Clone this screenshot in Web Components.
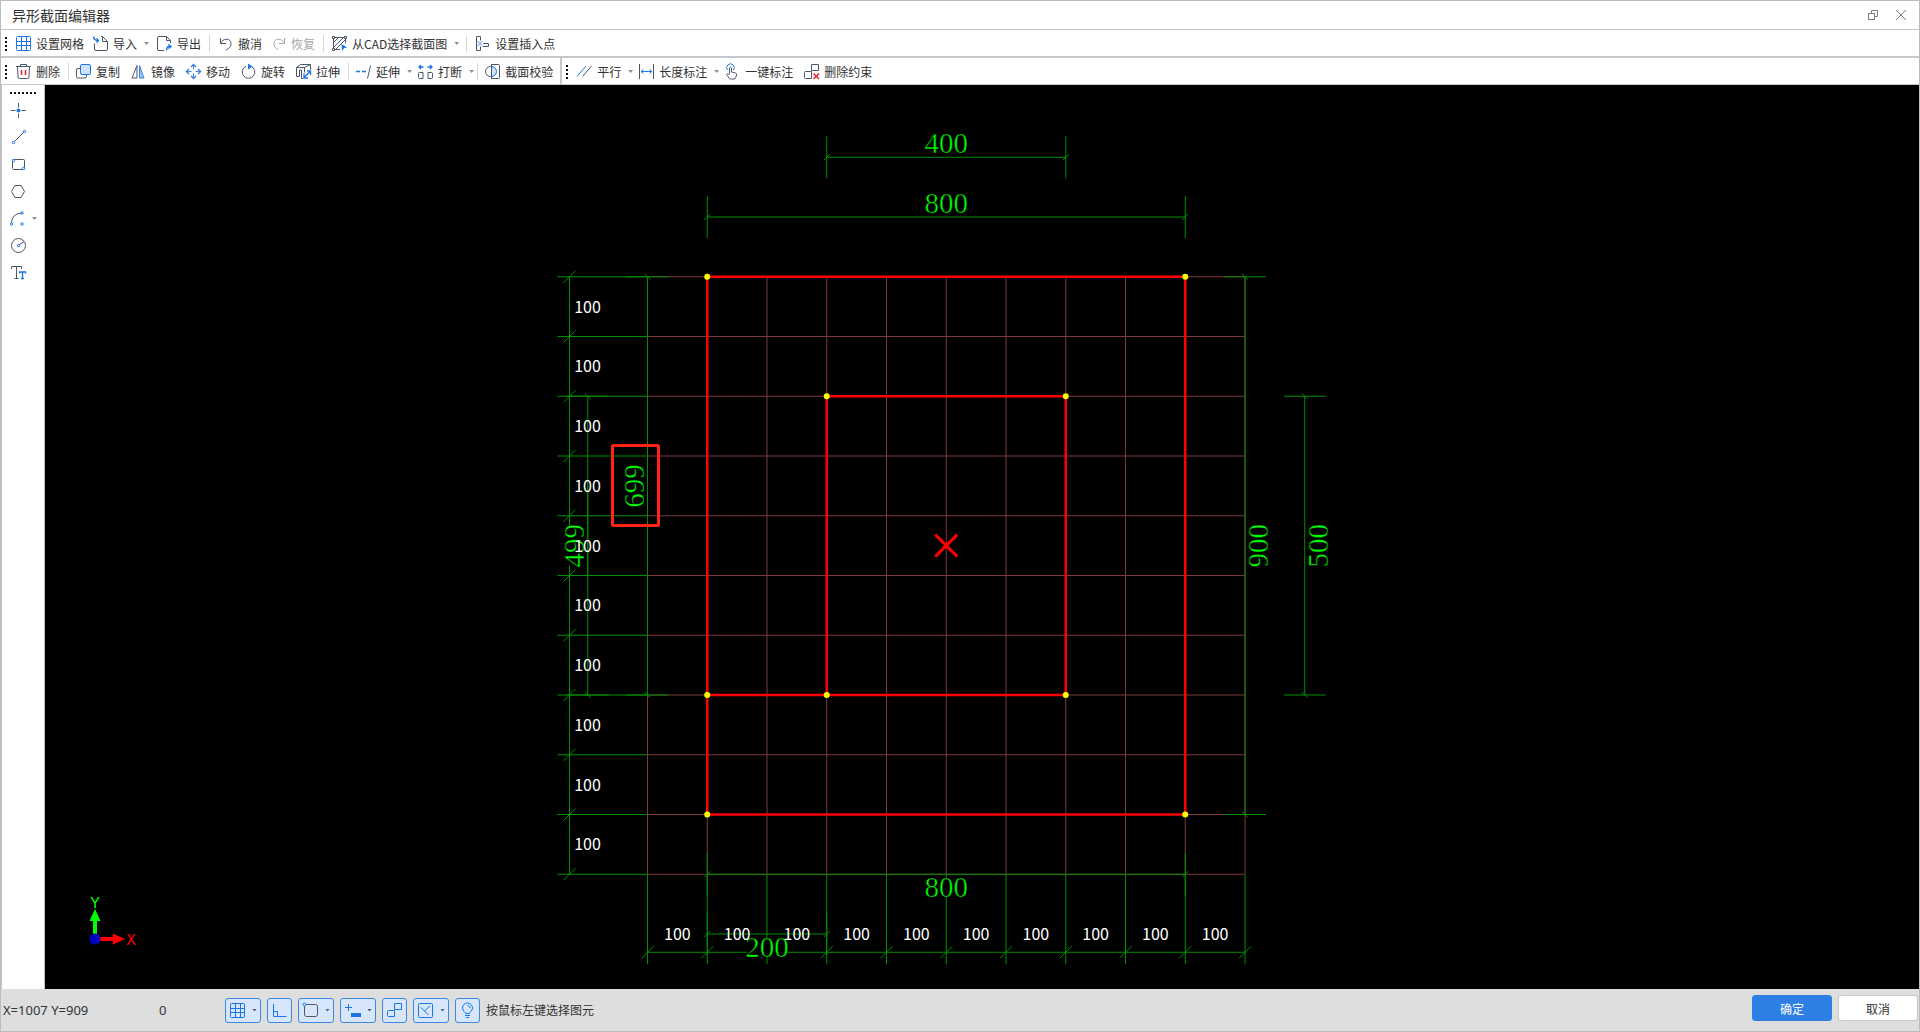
<!DOCTYPE html>
<html lang="zh-CN">
<head>
<meta charset="utf-8">
<title>异形截面编辑器</title>
<style>
  html, body { margin: 0; height: 100%; }
  body { font-family: "Noto Sans CJK SC", sans-serif; font-size: 12px; color: #333; }
</style>
</head>
<body>
<section-editor></section-editor>

<script>
const ICONS = {
  grid: '<g stroke="#1a76e8"><rect x="1.5" y="1.5" width="14" height="14" rx="1"/><path d="M6.5 1.5v14M11.5 1.5v14M1.5 6.5h14M1.5 10.5h14"/></g>',
  import: '<path d="M2.500 8.500v5.500a1.500 1.500 0 0 0 1.500 1.500h10a1.500 1.500 0 0 0 1.500-1.500V6.500l-5-5H9M10.500 1.500v5h5"/><path d="M1.500 1.500q.5 4 4 4" stroke="#1a76e8" stroke-width="1.500"/><path d="M4.500 2.500l3 3-3 3z" fill="#1a76e8" stroke="none"/>',
  export: '<path d="M8 15.500H3A1.500 1.500 0 0 1 1.500 14V3A1.500 1.500 0 0 1 3 1.500h7.500l4 4V8M10.500 1.500v4h4"/><path d="M10.500 15.500q0-4 3-4" stroke="#1a76e8" stroke-width="1.500"/><path d="M12.500 8.500l3.500 3-3.500 3z" fill="#1a76e8" stroke="none"/>',
  undo: '<path d="M3.500 3v5.500H9M3.500 8.500C5.500 3 14 2.500 14 8.500c0 3-1.500 4.500-5 6.500"/>',
  redo: '<g stroke="#a8a8a8"><path d="M14.500 3v5.500H9M14.500 8.500C12.500 3 4 2.500 4 8.500c0 3 1 4.500 4 6"/></g>',
  cad: '<path d="M3.500 2.500h11M2.500 4v10M14.500 4v4M4 14.500h5M3 7l4-4M3 12l9-9M5 14l9-9"/><path d="M1.500 1.500h2v2h-2zM13.500 1.500h2v2h-2zM1.500 13.500h2v2h-2z" fill="#fff"/><path d="M10.500 9l5.500 3.500-3 .8-2 2.700z" fill="#1a76e8" stroke="none"/>',
  insert: '<path d="M6.500 5.500v-4h-4v14h4v-4M9 8.500h5.500v3H9"/><path d="M3.500 6l5 5M8.500 6l-5 5" stroke="#4a94ec"/>',
  trash: '<path d="M1 3.500h15M5.500 3.500V1.500h6v2M2.500 3.500l.500 10.500q0 1.500 1.500 1.500h8q1.500 0 1.500-1.500l.5-10.500"/><path d="M6.500 7v5M10.500 7v5" stroke="#e8202c" stroke-width="1.500"/>',
  copy: '<path d="M5.500 5.500H3A1.500 1.500 0 0 0 1.500 7v6.500A1.500 1.500 0 0 0 3 15h7a1.500 1.500 0 0 0 1.500-1.500V12"/><rect x="5.500" y="1.500" width="10" height="10" rx="1.500" fill="#cfe2fb" stroke="#1a76e8"/>',
  mirror: '<path d="M7 2.500v12.500h-5z"/><path d="M9.500 2.500v12.500h4.500z" fill="#9cc4f4" stroke="#3b86de"/>',
  move: '<g stroke="#3b86de"><path d="M8.500 1.500v5M8.500 10.500v5M1.500 8.500h5M10.500 8.500h5"/><path d="M6 4l2.500-2.500L11 4M6 13l2.500 2.500L11 13M4 6L1.500 8.500 4 11M13 6l2.500 2.500L13 11" stroke-width="1.500"/></g>',
  rotate: '<path d="M11 3.200a6.300 6.300 0 1 1-5 0"/><path d="M8 .500l4.500 3L8 6.500z" fill="#1a76e8" stroke="none"/>',
  stretch: '<path d="M1.500 4.500l4-3h10v5M1.500 4.500h8v5M9.500 4.500l6-3M1.500 4.500v9h3V7h2v8.500h2"/><path d="M9 14.500l6-6M15.500 12V8H12M9 10.500V15h4" stroke="#1a76e8" stroke-width="1.300"/>',
  extend: '<path d="M1 8.500h4M7 8.500h4" stroke="#1a76e8" stroke-width="1.300"/><path d="M15.500 2.500l-3 13"/>',
  break: '<path d="M6 9.500H2.500a1 1 0 0 0-1 1v4a1 1 0 0 0 1 1H6zM14.500 9.500H11v6h3.500a1 1 0 0 0 1-1v-4a1 1 0 0 0-1-1z"/><path d="M2 4h4.500M10.500 4H15M4 2L2 4l2 2M13 2l2 2-2 2" stroke="#1a76e8" stroke-width="1.300"/>',
  check: '<path d="M7.500 1.500h7a1 1 0 0 1 1 1v12a1 1 0 0 1-1 1h-7"/><circle cx="6.500" cy="8.500" r="5"/><path d="M7.500 3.500a5 5 0 0 1 0 10z" fill="#cfe2fb" stroke="#1a76e8"/><path d="M7.500 1v15"/>',
  parallel: '<path d="M1 13.500L10 3" stroke="#1a76e8"/><path d="M6.500 13.500L15.500 3"/>',
  length: '<path d="M1.500 1v15M15.500 1v15"/><path d="M3 8.500h11M5.500 6.500l-2.500 2 2.500 2M11.500 6.500l2.500 2-2.500 2" stroke="#1a76e8"/>',
  hand: '<path d="M5.500 10.500V5q1-1.500 2 0v4l4 1q1.500.5 1 2l-1 3q-.5 1-1.500 1H6.500q-1 0-1.500-1L2.500 11.500q0-2 3 0"/><path d="M3.500 7a3.800 3.800 0 1 1 6 0" stroke="#1a76e8"/>',
  unlink: '<path d="M8.500 1.500h7v6h-7zM8.500 8.500h-6a1 1 0 0 0-1 1V14.500a1 1 0 0 0 1 1h6z"/><path d="M10.500 10.500l5.500 5.500M16 10.500L10.500 16" stroke="#e8202c" stroke-width="1.500"/>',
  point: '<path d="M8.500 1v4.500M8.500 11.500V16M1 8.500h4.500M11.500 8.500H16"/><circle cx="8.500" cy="8.500" r="2" fill="#1a76e8" stroke="none"/>',
  line: '<path d="M4.500 12.500l9-9"/><g stroke="#1a76e8" fill="#fff"><circle cx="3.500" cy="13.500" r="1.200"/><circle cx="14.500" cy="2.500" r="1.200"/></g>',
  rect: '<rect x="2.500" y="3.500" width="12" height="10" rx="1"/><g stroke="#1a76e8" fill="#fff"><circle cx="3.500" cy="4.500" r="1.200"/><circle cx="13.500" cy="12.500" r="1.200"/></g>',
  hex: '<path d="M5 2.500h6l3.500 6-3.500 6H5l-3.500-6z"/>',
  arc: '<path d="M1.500 13Q2 4 11 3"/><g stroke="#1a76e8" fill="#fff"><circle cx="1.500" cy="14" r="1.200"/><circle cx="12" cy="3" r="1.200"/><circle cx="12" cy="14" r="1.200"/></g>',
  circle: '<circle cx="8.500" cy="8.500" r="7"/><path d="M9.500 7.500L14 4.500"/><circle cx="8.500" cy="8.500" r="1.200" stroke="#1a76e8" fill="#fff"/>',
  text: '<path d="M1.500 5V2.500h10V5M6.500 2.500v12M4.500 14.500h4"/><path d="M9.500 9.500V8h6v1.500M12.500 8v6.500M11 14.500h3" stroke="#1a76e8" stroke-width="1.300"/>',
  ortho: '<g stroke="#1a76e8"><path d="M2.500 2v12.500h13M2.500 9.500h4v5"/></g>',
  snap: '<path d="M4 2.500h9.500a2 2 0 0 1 2 2v8a2 2 0 0 1-2 2h-9a2 2 0 0 1-2-2V4"/><circle cx="2.500" cy="2.500" r="1.500" stroke="#1a76e8" fill="#d8e6fb"/>',
  dynin: '<g stroke="#1a76e8"><path d="M4.500 2v7M1 5.500h7"/><rect x="7.500" y="11.500" width="9" height="3" fill="#1a76e8"/></g>',
  link: '<g stroke="#1a76e8"><path d="M8.500 1.500h7v6h-7zM8.500 8.500v6H2.500a1 1 0 0 1-1-1v-4a1 1 0 0 1 1-1z"/></g>',
  track: '<g stroke="#1a76e8"><rect x="1.500" y="1.500" width="14" height="14" rx="1"/><path d="M4 5.500l7.500 7.500M7.500 9l5.500-5"/></g>',
  bulb: '<g stroke="#1a76e8"><path d="M6.500 11.500c0-1.500-3-2.500-3-5.500a5 5 0 0 1 10 0c0 3-3 4-3 5.500zM6 13.500h5M7 15.500h3"/><path d="M8.500 3.500a2.500 2.500 0 0 1 2.500 2.500"/></g>',
  restore: '<g stroke="#7c7c7c"><rect x="3.500" y="6.500" width="6" height="6"/><path d="M6.500 6.500v-3h6v6h-3"/></g>',
  close: '<path d="M3 3l10 10M13 3L3 13" stroke="#7c7c7c"/>'
};

class EditorIcon extends HTMLElement {
  connectedCallback() {
    const root = this.attachShadow({ mode: 'open' });
    root.innerHTML = `
      <style>
        :host { display: block; width: 17px; height: 17px; flex: none; }
        svg { display: block; overflow: visible; }
      </style>
      <svg width="17" height="17" viewBox="0 0 17 17" fill="none" stroke="#4c566b" aria-hidden="true">${ICONS[this.getAttribute('name')]}</svg>`;
  }
}
customElements.define('editor-icon', EditorIcon);

class ToolButton extends HTMLElement {
  connectedCallback() {
    const root = this.attachShadow({ mode: 'open' });
    root.innerHTML = `
      <style>
        :host { display: flex; flex: none; }
        :host([menu]) { margin-right: var(--menu-trim, 0); }
        button { display: flex; align-items: center; gap: 4px; padding: 0; border: 0; background: none;
          font: inherit; line-height: 19px; color: inherit; white-space: nowrap; }
        button:disabled { color: #a8a8a8; }
        .caret { width: 5px; height: 3px; margin-left: 3px; background: #909090; clip-path: polygon(0 0, 100% 0, 50% 100%); }
      </style>
      <button type="button" ${this.hasAttribute('off') ? 'disabled' : ''}>
        <editor-icon name="${this.getAttribute('icon')}"></editor-icon>
        <slot></slot>
        ${this.hasAttribute('menu') ? '<span class="caret"></span>' : ''}
      </button>`;
  }
}
customElements.define('tool-button', ToolButton);

class ToolSeparator extends HTMLElement {
  connectedCallback() {
    this.attachShadow({ mode: 'open' }).innerHTML = `
      <style>:host { display: block; flex: none; width: 1px; height: 17px; margin: var(--sep-margin, 0); background: #d4d6da; }</style>`;
  }
}
customElements.define('tool-separator', ToolSeparator);

class ToolBar extends HTMLElement {
  connectedCallback() {
    this.attachShadow({ mode: 'open' }).innerHTML = `
      <style>
        :host { display: flex; align-items: center; gap: var(--gap, 8px); height: 25px; padding-top: 1px; background: #fff; }
        .grip { width: 2px; height: 14px; margin: 0 calc(8px - var(--gap, 8px)) 0 4px; flex: none;
          background: repeating-linear-gradient(#111 0 2px, transparent 2px 4px); }
      </style>
      <span class="grip"></span><slot></slot>`;
  }
}
customElements.define('tool-bar', ToolBar);

class TitleBar extends HTMLElement {
  connectedCallback() {
    this.attachShadow({ mode: 'open' }).innerHTML = `
      <style>
        :host { display: flex; align-items: center; justify-content: space-between; height: 28px;
          padding: 0 9px 0 11px; border-bottom: 1px solid #c3c3c7; background: #fff; }
        h1 { margin: 0; font-size: 14px; line-height: 20px; font-weight: 400; }
        div { display: flex; gap: 11px; }
        button { display: block; padding: 0; border: 0; background: none; }
      </style>
      <h1><slot></slot></h1>
      <div>
        <button type="button" aria-label="还原"><editor-icon name="restore"></editor-icon></button>
        <button type="button" aria-label="关闭"><editor-icon name="close"></editor-icon></button>
      </div>`;
  }
}
customElements.define('title-bar', TitleBar);

class DrawTools extends HTMLElement {
  connectedCallback() {
    const tools = [['point', '点'], ['line', '直线'], ['rect', '矩形'], ['hex', '多边形'], ['arc', '圆弧'], ['circle', '圆'], ['text', '文字']];
    this.attachShadow({ mode: 'open' }).innerHTML = `
      <style>
        :host { display: flex; flex-direction: column; flex: none; box-sizing: border-box; width: 44px; padding-top: 7px;
          background: #fff; border-left: 1px solid #c3c3c7; border-right: 1px solid #c3c3c7; }
        .grip { width: 26px; height: 2px; margin: 0 0 3px 8px; background: repeating-linear-gradient(90deg, #111 0 2px, transparent 2px 4px); }
        button { display: flex; align-items: center; height: 27px; padding: 0 0 0 8px; border: 0; background: none; }
        .caret { width: 5px; height: 3px; margin-left: 5px; background: #909090; clip-path: polygon(0 0, 100% 0, 50% 100%); }
      </style>
      <span class="grip"></span>
      ${tools.map(([icon, label]) => `<button type="button" aria-label="${label}"><editor-icon name="${icon}"></editor-icon>${icon === 'arc' ? '<span class="caret"></span>' : ''}</button>`).join('')}`;
  }
}
customElements.define('draw-tools', DrawTools);

class SectionCanvas extends HTMLElement {
  connectedCallback() {
    // Section coordinates are in millimetres, measured from the grid's top-left corner.
    const SCALE = 0.5975, CELL = 100, COUNT = 10;
    const X = mm => 602.5 + mm * SCALE;
    const Y = mm => 191.75 + mm * SCALE;
    const seg = (x1, y1, x2, y2) => `M${x1} ${y1}L${x2} ${y2}`;

    let grid = '', dims = '', labels = '', dimText = '';
    const left = X(0), right = X(1000), top = Y(0), bottom = Y(1000);
    const chainX = left - 78, chainY = bottom + 78;
    for (let i = 0; i <= COUNT; i++) {
      const x = X(i * CELL), y = Y(i * CELL);
      grid += seg(x, top, x, bottom) + seg(left, y, right, y);
      dims += seg(chainX - 12, y, left, y) + seg(chainX - 6, y + 6, chainX + 6, y - 6);
      dims += seg(x, bottom, x, chainY + 12) + seg(x - 6, chainY + 6, x + 6, chainY - 6);
      if (i < COUNT) {
        labels += `<text x="${chainX + 18}" y="${Y(i * CELL + 50) + 6}">100</text>`;
        labels += `<text x="${X(i * CELL + 50)}" y="${chainY - 12}">100</text>`;
      }
    }
    dims += seg(chainX, top, chainX, bottom) + seg(left, chainY, right, chainY);

    const EXT = 21, TICK = 3;
    const horizontal = (from, to, at, label, below) => {
      const a = X(from), b = X(to), y = Y(at), base = y + (below ? 23 : -4), mid = (a + b) / 2;
      dims += seg(a, y, b, y);
      for (const x of [a, b]) dims += seg(x, y - EXT, x, y + EXT) + seg(x - TICK, y + TICK, x + TICK, y - TICK);
      dimText += `<rect x="${mid - 20}" y="${base - 19}" width="40" height="19" fill="#000"/><text x="${mid}" y="${base}">${label}</text>`;
    };
    const vertical = (from, to, at, label, after) => {
      const a = Y(from), b = Y(to), x = X(at), base = x + (after ? 23 : -4), mid = (a + b) / 2;
      dims += seg(x, a, x, b);
      for (const y of [a, b]) dims += seg(x - EXT, y, x + EXT, y) + seg(x - TICK, y - TICK, x + TICK, y + TICK);
      dimText += `<g transform="translate(${base} ${mid}) rotate(-90)"><rect x="-20" y="-19" width="40" height="19" fill="#000"/><text>${label}</text></g>`;
    };
    horizontal(300, 700, -200, '400');
    horizontal(100, 900, -100, '800');
    horizontal(100, 900, 1000, '800', true);
    horizontal(100, 300, 1100, '200', true);
    vertical(0, 700, 0, '699');
    vertical(200, 700, -100, '499');
    vertical(0, 900, 1000, '900', true);
    vertical(200, 700, 1100, '500', true);

    const outline = [[100, 0, 900, 0], [900, 0, 900, 900], [900, 900, 100, 900], [100, 900, 100, 0],
      [300, 200, 700, 200], [700, 200, 700, 700], [700, 700, 100, 700], [300, 700, 300, 200]]
      .map(([a, b, c, d]) => seg(X(a), Y(b), X(c), Y(d))).join('');
    const nodes = [[100, 0], [900, 0], [300, 200], [700, 200], [100, 700], [300, 700], [700, 700], [100, 900], [900, 900]]
      .map(([a, b]) => `<circle cx="${X(a)}" cy="${Y(b)}" r="3"/>`).join('');
    const cx = X(500), cy = Y(450);

    this.attachShadow({ mode: 'open' }).innerHTML = `
      <style>
        :host { display: block; flex: 1; min-width: 0; min-height: 0; background: #000; overflow: hidden; }
        svg { display: block; width: 100%; height: 100%; }
        text { text-anchor: middle; stroke: none; }
        .cell { font: 16px "Noto Sans CJK SC", sans-serif; fill: #fff; }
        .dim { font: 29px "Liberation Serif", serif; fill: #0f0; }
        .dim text { stroke: #000; stroke-width: .5; }
        .axis { font: 16px "Liberation Mono", monospace; }
      </style>
      <svg viewBox="0 0 1874 904" fill="none">
        <path d="${grid}" stroke="#7c3a3e"/>
        <path d="${dims}" stroke="#009000"/>
        <path d="${outline}" stroke="#f00" stroke-width="2.500"/>
        <g fill="#ff0">${nodes}</g>
        <path d="${seg(cx - 11, cy - 11, cx + 11, cy + 11)}${seg(cx + 11, cy - 11, cx - 11, cy + 11)}" stroke="#f00" stroke-width="3"/>
        <g class="dim">${dimText}</g>
        <path d="${seg(X(-100), Y(350), X(-100), Y(500))}" stroke="#009000"/>
        <g class="cell">${labels}</g>
        <rect x="567.500" y="360.500" width="46" height="80" rx="1" stroke="#ff2314" stroke-width="3"/>
        <g class="axis">
          <path d="M48 850V836h-3.500L50 824l5.500 12H52v14z" fill="#0f0"/>
          <path d="M54 852h14v-3.500L80 854l-12 5.500V856H54z" fill="#f00"/>
          <circle cx="50" cy="854" r="5.500" fill="#0000c0"/>
          <text x="50" y="823" fill="#0f0">Y</text>
          <text x="86" y="860" fill="#f00">X</text>
        </g>
      </svg>`;
  }
}
customElements.define('section-canvas', SectionCanvas);

class StatusToggle extends HTMLElement {
  connectedCallback() {
    const menu = this.hasAttribute('menu');
    this.attachShadow({ mode: 'open' }).innerHTML = `
      <style>
        :host { display: block; flex: none; }
        button { display: flex; align-items: center; justify-content: space-between; box-sizing: border-box;
          width: ${menu ? 36 : 25}px; height: 25px; padding: 0 3px;
          border: 1px solid #3d88e4; border-radius: 3px; background: #d8e6fb; }
        .caret { width: 5px; height: 3px; background: #566070; clip-path: polygon(0 0, 100% 0, 50% 100%); }
      </style>
      <button type="button" aria-pressed="true" aria-label="${this.getAttribute('label')}">
        <editor-icon name="${this.getAttribute('icon')}"></editor-icon>${menu ? '<span class="caret"></span>' : ''}
      </button>`;
  }
}
customElements.define('status-toggle', StatusToggle);

class StatusBar extends HTMLElement {
  connectedCallback() {
    this.attachShadow({ mode: 'open' }).innerHTML = `
      <style>
        :host { display: flex; align-items: center; flex: none; height: 42px; padding: 0 1px 0 2px; background: #dededf; }
        .coords, .count { font: 13px "Noto Sans", sans-serif; line-height: 18px; }
        .coords { width: 156px; }
        .count { width: 66px; }
        .toggles { display: flex; gap: 6px; margin-right: 6px; }
        .prompt { flex: 1; line-height: 18px; }
        .actions { display: flex; gap: 6px; padding-bottom: 4px; }
        .actions button { box-sizing: border-box; width: 80px; height: 26px; padding: 0; border: 1px solid #c6c6c8; border-radius: 3px;
          background: #fff; font: inherit; color: #333; }
        .actions .primary { border-color: #2d7fe3; background: #2d7fe3; color: #fff; }
      </style>
      <span class="coords">X=1007 Y=909</span>
      <span class="count">0</span>
      <div class="toggles">
        <status-toggle icon="grid" label="网格" menu></status-toggle>
        <status-toggle icon="ortho" label="正交"></status-toggle>
        <status-toggle icon="snap" label="捕捉" menu></status-toggle>
        <status-toggle icon="dynin" label="动态输入" menu></status-toggle>
        <status-toggle icon="link" label="约束"></status-toggle>
        <status-toggle icon="track" label="追踪" menu></status-toggle>
        <status-toggle icon="bulb" label="提示"></status-toggle>
      </div>
      <span class="prompt">按鼠标左键选择图元</span>
      <div class="actions">
        <button type="button" class="primary">确定</button>
        <button type="button">取消</button>
      </div>`;
  }
}
customElements.define('status-bar', StatusBar);

class SectionEditor extends HTMLElement {
  connectedCallback() {
    this.attachShadow({ mode: 'open' }).innerHTML = `
      <style>
        :host { display: flex; flex-direction: column; box-sizing: border-box; height: 100vh; border: 1px solid #bcbcbe; background: #fff; }
        .file { --gap: 8px; --menu-trim: -1px; --sep-margin: 0 -1px 0 0; border-bottom: 2px solid #c4c7cc; }
        .row { display: flex; border-bottom: 1px solid #c4c7cc; }
        .row tool-bar { --gap: 10px; --menu-trim: -5px; --sep-margin: 0 -4px 0 -2px; }
        .edit { padding-right: 7px; border-right: 2px solid #c4c7cc; }
        .limits { flex: 1; }
        .work { display: flex; flex: 1; min-height: 0; }
      </style>
      <title-bar>异形截面编辑器</title-bar>
      <tool-bar class="file">
        <tool-button icon="grid">设置网格</tool-button>
        <tool-button icon="import" menu>导入</tool-button>
        <tool-button icon="export">导出</tool-button>
        <tool-separator></tool-separator>
        <tool-button icon="undo">撤消</tool-button>
        <tool-button icon="redo" off>恢复</tool-button>
        <tool-separator></tool-separator>
        <tool-button icon="cad" menu>从CAD选择截面图</tool-button>
        <tool-separator></tool-separator>
        <tool-button icon="insert">设置插入点</tool-button>
      </tool-bar>
      <div class="row">
        <tool-bar class="edit">
          <tool-button icon="trash">删除</tool-button>
          <tool-separator></tool-separator>
          <tool-button icon="copy">复制</tool-button>
          <tool-button icon="mirror">镜像</tool-button>
          <tool-button icon="move">移动</tool-button>
          <tool-button icon="rotate">旋转</tool-button>
          <tool-button icon="stretch">拉伸</tool-button>
          <tool-separator></tool-separator>
          <tool-button icon="extend" menu>延伸</tool-button>
          <tool-button icon="break" menu>打断</tool-button>
          <tool-separator></tool-separator>
          <tool-button icon="check">截面校验</tool-button>
        </tool-bar>
        <tool-bar class="limits">
          <tool-button icon="parallel" menu>平行</tool-button>
          <tool-button icon="length" menu>长度标注</tool-button>
          <tool-button icon="hand">一键标注</tool-button>
          <tool-button icon="unlink">删除约束</tool-button>
        </tool-bar>
      </div>
      <div class="work">
        <draw-tools></draw-tools>
        <section-canvas></section-canvas>
      </div>
      <status-bar></status-bar>`;
  }
}
customElements.define('section-editor', SectionEditor);
</script>
</body>
</html>
